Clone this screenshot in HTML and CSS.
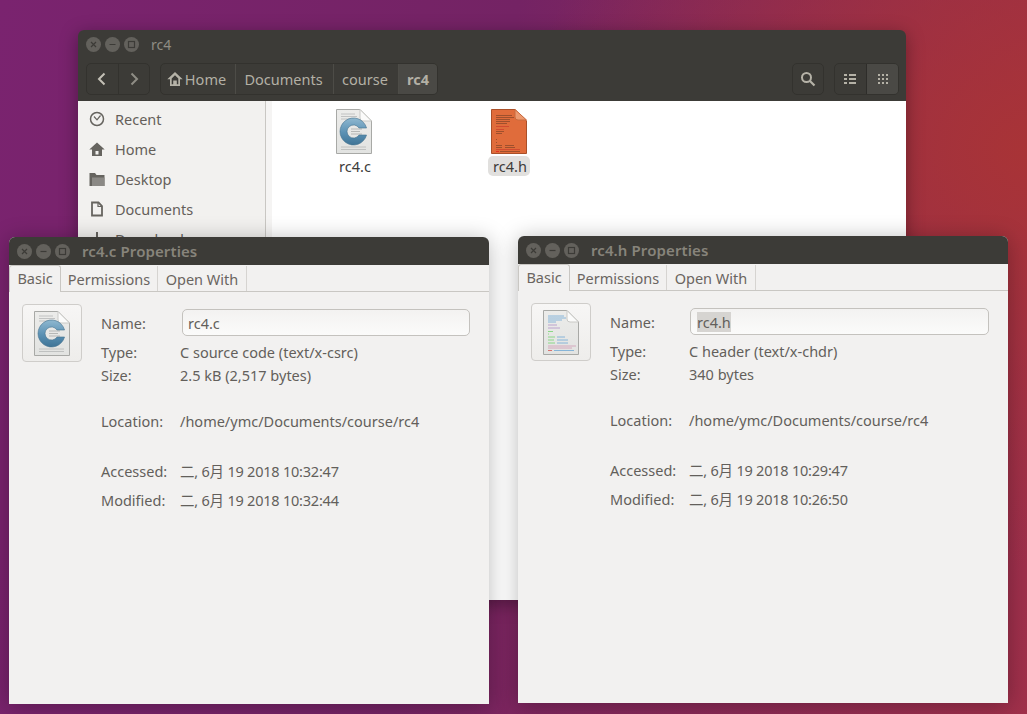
FILE: index.html
```html
<!DOCTYPE html>
<html lang="en">
<head>
<meta charset="utf-8">
<title>rc4 files</title>
<link rel="stylesheet" href="styles.css">
</head>
<body>
<svg class="defs" width="0" height="0" aria-hidden="true">
  <defs>
    <linearGradient id="paper" x1="0" y1="0" x2="0" y2="1"><stop offset="0" stop-color="#ececea"/><stop offset="1" stop-color="#e2e3e1"/></linearGradient>
    <linearGradient id="cblue" x1="0" y1="0" x2="0" y2="1"><stop offset="0" stop-color="#8fb8d0"/><stop offset=".55" stop-color="#5a90b3"/><stop offset="1" stop-color="#3f7496"/></linearGradient>
    <symbol id="c-file" viewBox="0 0 36 45">
      <path d="M.5.5H24L35.5 12V44.500H.5Z" fill="url(#paper)" stroke="#a8a9a6"/>
      <path d="M24 .5V9a3 3 0 0 0 3 3h8.500Z" fill="#fbfbfa" stroke="#c9c9c6"/>
      <path d="M5 5h14M5 7.500h16M5 10h12M30 38h-25M30 40.500h-25" stroke="#b6b8b7" stroke-width=".8"/>
      <path d="M15 20h11M15 22.500h9M15 25h11" stroke="#a9abaa" stroke-width=".8"/>
      <path d="M30.550 19H23A6.500 6.500 0 1 0 23 26H30.550A13.500 13.500 0 1 1 30.550 19Z" fill="url(#cblue)" stroke="#44728f" stroke-width=".6"/>
    </symbol>
    <symbol id="h-orange" viewBox="0 0 36 45">
      <path d="M.5.5H24L35.5 12V44.500H.5Z" fill="#e06c3b" stroke="#aa5029"/>
      <path d="M24 .5V8a3 3 0 0 0 3 3h8.500Z" fill="#ec9a70" stroke="#c96a3e"/>
      <path d="M5 6.500h16M5 8.500h18M5 10.500h14M5 12.500h14M5 14.500h11M5 22.500h8M5 24.500h6M5 30.500h1M5 33.500h1M5 36.500h6M14 36.500h9M5 38.500h6M14 38.500h10" stroke="#5e3520" stroke-width=".5"/>
      <path d="M5 17.500h13M5 20.500h8M5 40.500h24" stroke="#c6352a" stroke-width=".6"/>
      <path d="M5 42.500h3" stroke="#e2231a" stroke-width=".8"/>
      <path d="M9 42.500h20" stroke="#5e3520" stroke-width=".5"/>
    </symbol>
    <symbol id="h-white" viewBox="0 0 36 45">
      <path d="M.5.5H24L35.5 12V44.500H.5Z" fill="url(#paper)" stroke="#a8a9a6"/>
      <path d="M24 .5V9a3 3 0 0 0 3 3h8.500Z" fill="#fbfbfa" stroke="#c9c9c6"/>
      <g stroke-width=".8">
      <path d="M5 6h16M5 8h18M5 10h14M5 12h8" stroke="#6fa8d6"/>
      <path d="M5 15h9M5 18h12" stroke="#b08fc8"/>
      <path d="M5 21.500h5M5 24h1M5 27h7M5 30h6M5 33h7" stroke="#74d36f"/>
      <path d="M14 27h8M14 30h11M14 33h11" stroke="#6fa8d6"/>
      <path d="M5 36h28M5 38h24" stroke="#cf9ab4"/>
      <path d="M5 40.500h4" stroke="#d9534f"/><path d="M11 40.500h20" stroke="#6fa8d6"/>
      </g>
    </symbol>
  </defs>
</svg>

<section class="win files">
  <header class="head">
    <div class="titlebar">
      <div class="wbtns"><span class="wbtn"><svg viewBox="0 0 15 15"><path d="M5 5l5 5M10 5l-5 5"/></svg></span><span class="wbtn"><svg viewBox="0 0 15 15"><path d="M4.500 7.500h6"/></svg></span><span class="wbtn"><svg viewBox="0 0 15 15"><rect x="4.500" y="4.500" width="6" height="6"/></svg></span></div>
      <span class="wtitle">rc4</span>
    </div>
    <div class="toolbar">
      <div class="group nav">
        <span class="tb w32"><svg class="ico" viewBox="0 0 16 16"><path d="M10.500 2.500L5 8l5.500 5.500" class="chev"/></svg></span>
        <span class="tb w32 dimic"><svg class="ico" viewBox="0 0 16 16"><path d="M5.500 2.500L11 8l-5.500 5.500" class="chev"/></svg></span>
      </div>
      <div class="group crumbs">
        <span class="crumb c-home"><svg class="ico home" viewBox="0 0 16 16"><path fill-rule="evenodd" d="M8 1L.3 8.300H3V15H13V8.300H15.700L8 1ZM4.700 7.500L8 4.300 11.300 7.500V13.300H9.800V9.500H6.200V13.300H4.700Z" fill="#b5b2a7"/></svg>Home</span>
        <span class="crumb c-docs">Documents</span>
        <span class="crumb c-course">course</span>
        <span class="crumb c-rc4">rc4</span>
      </div>
      <div class="spacer"></div>
      <div class="group search"><span class="tb w32"><svg class="ico" viewBox="0 0 16 16"><circle cx="6.500" cy="6.500" r="4.500" fill="none" stroke="#b5b2a7" stroke-width="2"/><path d="M10 10l4.500 4.500" stroke="#b5b2a7" stroke-width="2.200"/></svg></span></div>
      <div class="group views">
        <span class="tb w32"><svg class="ico" viewBox="0 0 16 16"><path d="M1 3h3v2H1zM6 3h7v2H6zM1 7h3v2H1zM6 7h7v2H6zM1 11h3v2H1zM6 11h7v2H6z" fill="#b5b2a7"/></svg></span>
        <span class="tb w33 on"><svg class="ico" viewBox="0 0 16 16"><path d="M3 3h2v2H3zM7 3h2v2H7zM11 3h2v2h-2zM3 7h2v2H3zM7 7h2v2H7zM11 7h2v2h-2zM3 11h2v2H3zM7 11h2v2H7zM11 11h2v2h-2z" fill="#b5b2a7"/></svg></span>
      </div>
    </div>
  </header>
  <div class="files-body">
    <nav class="sidebar">
      <div class="side-row"><svg class="sico" viewBox="0 0 16 16"><circle cx="8" cy="8" r="6.500" fill="none" stroke="#66645f" stroke-width="1.500"/><path d="M5 5.500L8 8.800 11.500 4.500" fill="none" stroke="#66645f" stroke-width="1.200"/></svg>Recent</div>
      <div class="side-row"><svg class="sico" viewBox="0 0 16 16"><path fill-rule="evenodd" d="M8 1.500L.3 8.500H3V15H13V8.500H15.700L8 1.500ZM6.500 10H9.500V13.500H6.500Z" fill="#66645f"/></svg>Home</div>
      <div class="side-row"><svg class="sico" viewBox="0 0 16 16"><path d="M.5 2h5.500l1.500 2H15.500V15H.5z" fill="#66645f"/><path d="M3 6.500h12.500V15H3z" fill="#8b8985"/></svg>Desktop</div>
      <div class="side-row"><svg class="sico" viewBox="0 0 16 16"><path d="M3 1.500h6.500L13 5v9.500H3z" fill="none" stroke="#66645f" stroke-width="1.800"/><path d="M9 1.500V5.500h4" fill="none" stroke="#66645f" stroke-width="1.200"/></svg>Documents</div>
      <div class="side-row"><svg class="sico" viewBox="0 0 16 16"><path d="M7 1h2v7h3l-4 4-4-4h3zM2 13h12v2H2z" fill="#66645f"/></svg>Downloads</div>
    </nav>
    <div class="side-strip"></div>
    <main class="grid-view">
      <figure class="file"><svg class="file-ico"><use href="#c-file"/></svg><figcaption>rc4.c</figcaption></figure>
      <figure class="file sel"><svg class="file-ico"><use href="#h-orange"/></svg><figcaption>rc4.h</figcaption></figure>
    </main>
  </div>
</section>

<section class="win dialog d-c">
  <div class="d-title">
    <div class="wbtns"><span class="wbtn"><svg viewBox="0 0 15 15"><path d="M5 5l5 5M10 5l-5 5"/></svg></span><span class="wbtn"><svg viewBox="0 0 15 15"><path d="M4.500 7.500h6"/></svg></span><span class="wbtn"><svg viewBox="0 0 15 15"><rect x="4.500" y="4.500" width="6" height="6"/></svg></span></div>
    <span class="wtitle bold">rc4.c Properties</span>
  </div>
  <div class="tabs"><span class="tab active">Basic</span><span class="tab t-perm">Permissions</span><span class="tab t-open">Open With</span></div>
  <div class="props">
    <div class="thumb"><svg class="thumb-ico"><use href="#c-file"/></svg></div>
    <div class="info">
      <span class="k r-name">Name:</span><span class="v r-name"><span class="input">rc4.c</span></span>
      <span class="k r-type">Type:</span><span class="v r-type">C source code (text/x-csrc)</span>
      <span class="k r-size">Size:</span><span class="v r-size">2.5 kB (2,517 bytes)</span>
      <span class="k r-loc">Location:</span><span class="v r-loc">/home/ymc/Documents/course/rc4</span>
      <span class="k r-acc">Accessed:</span><span class="v r-acc date">二, 6月 19 2018 10:32:47</span>
      <span class="k r-mod">Modified:</span><span class="v r-mod date">二, 6月 19 2018 10:32:44</span>
    </div>
  </div>
</section>

<section class="win dialog d-h">
  <div class="d-title">
    <div class="wbtns"><span class="wbtn"><svg viewBox="0 0 15 15"><path d="M5 5l5 5M10 5l-5 5"/></svg></span><span class="wbtn"><svg viewBox="0 0 15 15"><path d="M4.500 7.500h6"/></svg></span><span class="wbtn"><svg viewBox="0 0 15 15"><rect x="4.500" y="4.500" width="6" height="6"/></svg></span></div>
    <span class="wtitle bold">rc4.h Properties</span>
  </div>
  <div class="tabs"><span class="tab active">Basic</span><span class="tab t-perm">Permissions</span><span class="tab t-open">Open With</span></div>
  <div class="props">
    <div class="thumb"><svg class="thumb-ico"><use href="#h-white"/></svg></div>
    <div class="info">
      <span class="k r-name">Name:</span><span class="v r-name"><span class="input"><span class="hl">rc4.h</span></span></span>
      <span class="k r-type">Type:</span><span class="v r-type">C header (text/x-chdr)</span>
      <span class="k r-size">Size:</span><span class="v r-size">340 bytes</span>
      <span class="k r-loc">Location:</span><span class="v r-loc">/home/ymc/Documents/course/rc4</span>
      <span class="k r-acc">Accessed:</span><span class="v r-acc date">二, 6月 19 2018 10:29:47</span>
      <span class="k r-mod">Modified:</span><span class="v r-mod date">二, 6月 19 2018 10:26:50</span>
    </div>
  </div>
</section>
</body>
</html>
```

FILE: styles.css
```css
* { box-sizing: border-box; }
html, body { height: 100%; }
body {
  margin: 0;
  overflow: hidden;
  position: relative;
  width: 1027px;
  height: 714px;
  font-family: "Noto Sans", "Noto Sans CJK SC", sans-serif;
  font-size: 14px;
  color: #5f5c58;
  background:
    radial-gradient(ellipse 500px 420px at 1027px 150px, rgba(170,52,52,.9), rgba(170,52,52,0)),
    linear-gradient(100deg, #7a236f 0%, #742364 45%, #8c2a55 75%, #a0304a 100%);
}
.defs { position: absolute; }
.win { position: absolute; display: flex; flex-direction: column; }
.files { left: 78px; top: 30px; width: 828px; height: 570px; border-radius: 6px 6px 0 0; box-shadow: 0 4px 18px rgba(0,0,0,.35); overflow: hidden; }
.dialog { background: #f2f1f0; border-radius: 6px 6px 0 0; box-shadow: 0 2px 22px rgba(0,0,0,.28); }
.d-c { left: 9px; top: 237px; width: 480px; height: 467px; }
.d-h { left: 518px; top: 236px; width: 490px; height: 467px; }

.head { background: #3c3b37; height: 71px; flex: none; }
.titlebar { height: 29px; display: flex; align-items: center; padding-left: 8px; }
.wbtns { display: flex; gap: 4px; }
.wbtn { width: 15px; height: 15px; border-radius: 50%; background: #63615c; display: block; }
.wbtn svg { display: block; width: 15px; height: 15px; fill: none; stroke: #3c3b37; stroke-width: 1.2; }
.wtitle { margin-left: 12px; color: #8f8c83; font-size: 14px; }
.wtitle.bold { font-weight: 600; font-size: 15px; letter-spacing: .1px; color: #87847b; }

.toolbar { height: 42px; display: flex; align-items: flex-start; padding: 4px 7px 0 8px; }
.group { display: flex; height: 32px; border: 1px solid #33322e; border-radius: 5px; color: #b3b0a5; font-size: 14.500px; }
.nav { width: 64px; }
.crumbs { width: 278px; margin-left: 10px; }
.search { width: 32px; }
.views { width: 65px; margin-left: 10px; }
.spacer { flex: 1; }
.tb { display: flex; align-items: center; justify-content: center; flex: 1; }
.tb + .tb { border-left: 1px solid #33322e; }
.tb.on { background: #4a4945; border-left-color: #2e2d2a; border-radius: 0 4px 4px 0; }
.ico { width: 16px; height: 16px; display: block; flex: none; }
.chev { fill: none; stroke: #c3c0b6; stroke-width: 2; }
.dimic .chev { stroke: #8f8d85; }
.crumb { display: flex; align-items: center; justify-content: center; border-right: 1px solid #4d4c47; padding-right: 2px; }
.home { margin-right: 2px; margin-left: -1px; }
.c-home { width: 75px; }
.c-docs { width: 98px; }
.c-course { width: 65px; }
.c-rc4 { flex: 1; background: #4a4945; border-right: 0; padding-right: 0; font-weight: 700; border-radius: 0 4px 4px 0; }

.files-body { flex: 1; display: flex; min-height: 0; background: #fff; }
.sidebar { width: 188px; flex: none; background: #f2f1ef; border-right: 1px solid #c9c7c3; padding-top: 3px; overflow: hidden; }
.side-strip { width: 6px; flex: none; background: #f5f4f3; }
.side-row { height: 30px; display: flex; align-items: center; padding-left: 11px; gap: 10px; color: #655f5a; font-size: 14.500px; }
.sico { width: 16px; height: 16px; flex: none; }
.grid-view { flex: 1; display: flex; gap: 1px; padding: 8px 0 0 5px; align-items: flex-start; }
.file { margin: 0; width: 154px; display: flex; flex-direction: column; align-items: center; }
.file-ico { width: 36px; height: 45px; display: block; }
.file figcaption { margin-top: 2px; height: 20px; line-height: 20px; padding: 0 3px 0 5px; font-size: 14.500px; color: #3d3c3a; border-radius: 5px; }
.file.sel figcaption { background: #e1e0de; }

.d-title { height: 28px; flex: none; background: #3c3b37; display: flex; align-items: center; padding-left: 8px; border-radius: 6px 6px 0 0; }
.tabs { height: 27px; flex: none; display: flex; border-bottom: 1px solid #c9c7c3; align-items: flex-end; }
.tab { height: 25px; display: flex; align-items: center; justify-content: center; border-right: 1px solid #d6d4d1; font-size: 14.500px; color: #6a6560; }
.tab.active { width: 52px; height: 27px; margin-bottom: -1px; padding-bottom: 2px; background: #f2f1f0; border: 1px solid #c9c7c3; border-bottom: 0; border-radius: 3px 3px 0 0; }
.t-perm { width: 97px; }
.t-open { width: 89px; }

.props { display: flex; padding: 12px 0 0 13px; }
.thumb { width: 60px; height: 58px; flex: none; border: 1px solid #cfcdca; border-radius: 4px; background: linear-gradient(#f7f6f5, #eeedeb); display: flex; align-items: center; justify-content: center; }
.thumb-ico { width: 36px; height: 45px; }
.info { margin-left: 19px; margin-top: 1px; width: 369px; display: grid; grid-template-columns: 79px 290px; grid-template-rows: 35px 24px 22px 70px 29px 29px; font-size: 14.500px; color: #635f5b; }
.d-h .info { width: 379px; grid-template-columns: 79px 300px; }
.k, .v { display: flex; align-items: center; white-space: nowrap; }
.date { letter-spacing: -.22px; }
.input { width: 288px; height: 27px; margin-left: 2px; padding-left: 5px; display: flex; align-items: center; border: 1px solid #c4c2be; border-radius: 5px; background: linear-gradient(#f3f2f1, #fbfbfa); }
.d-h .input { width: 299px; margin-left: 1px; padding-left: 6px; }
.hl { background: #d6d4d1; }
```
